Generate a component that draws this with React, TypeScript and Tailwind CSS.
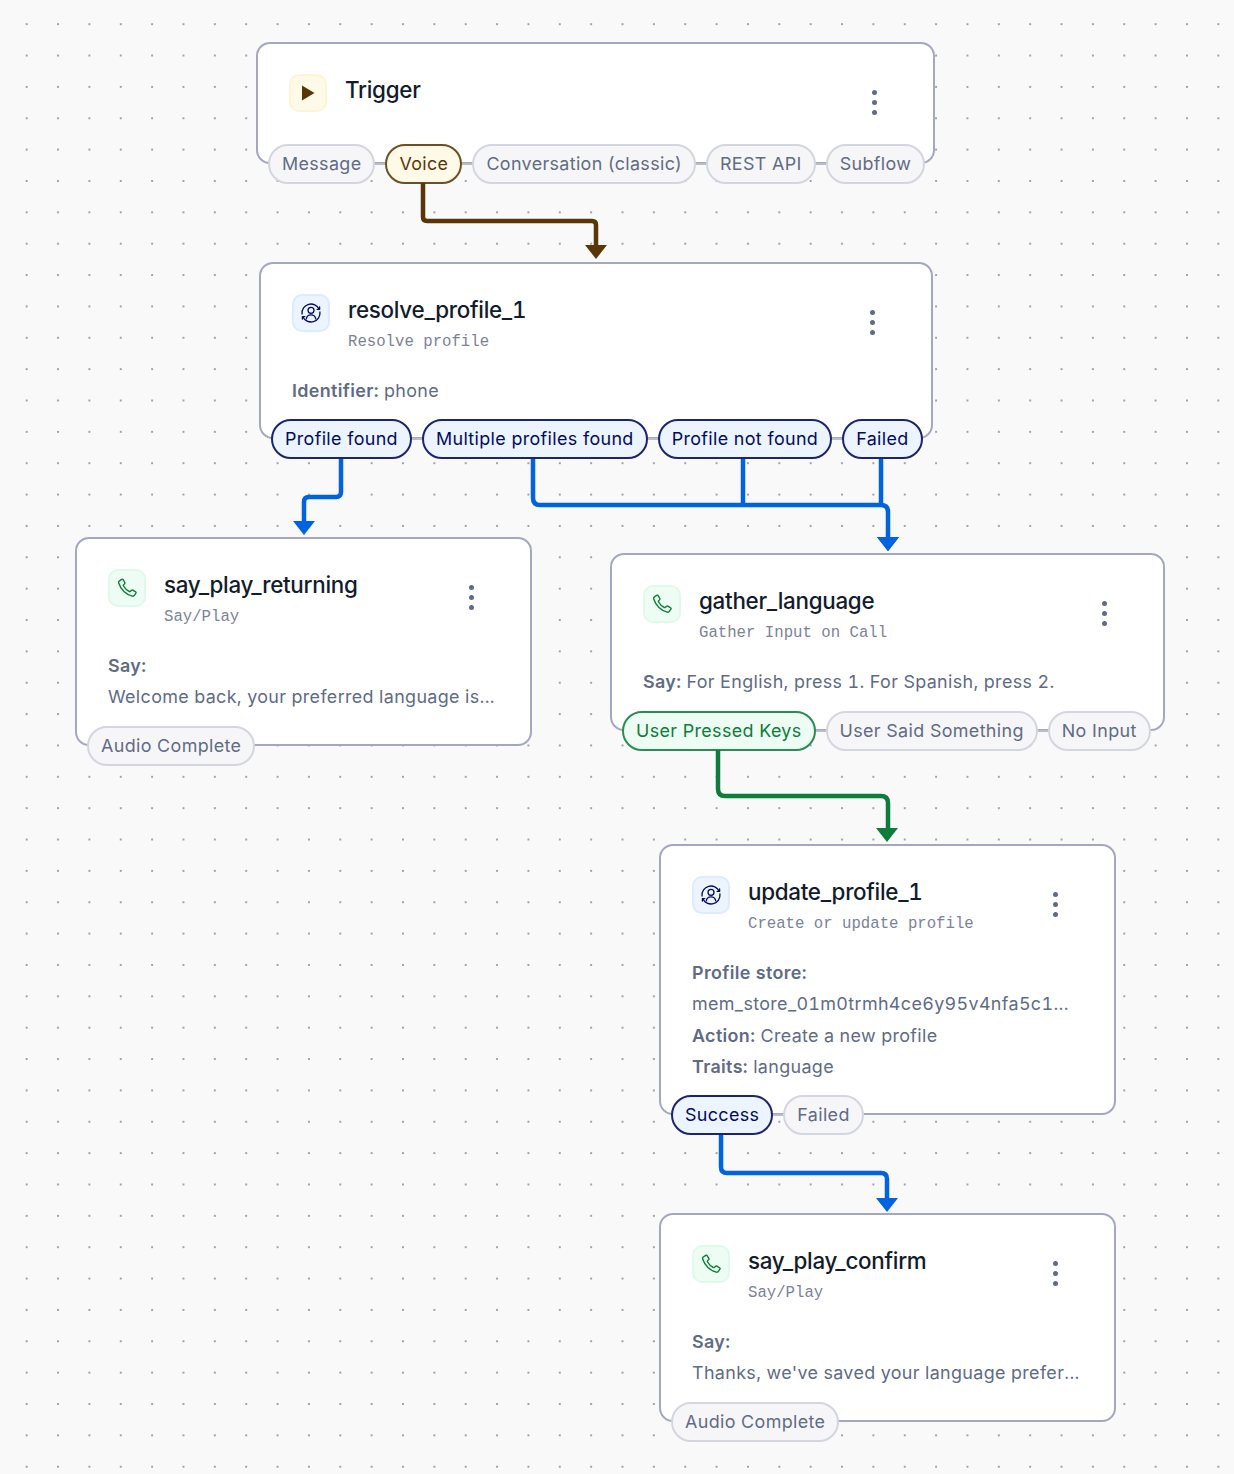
import React from 'react';

type Tone = 'gray' | 'blue' | 'green' | 'brown';

const chipStyles: Record<Tone, string> = {
  gray: 'bg-[#f6f6f8] border-[#d4d6df] text-[#606b85]',
  blue: 'bg-[#ebf4ff] border-[#1c2470] text-[#030b5d]',
  green: 'bg-[#edfdf3] border-[#2a8c52] text-[#0e7c3a]',
  brown: 'bg-[#fff9e8] border-[#6e4e24] text-[#5a3607]',
};

function Chips({ items }: { items: [string, Tone][] }) {
  return (
    <div className="absolute left-[10px] bottom-[-22px] flex items-center">
      {items.map(([label, tone], i) => (
        <React.Fragment key={label}>
          {i > 0 && <div className="w-[10px] h-[2px] bg-[#b9bccb]" />}
          <div className={`h-[40px] px-[12px] flex items-center rounded-[20px] border-2 whitespace-nowrap text-[17.92px] tracking-[0.35px] ${chipStyles[tone]}`}>
            {label}
          </div>
        </React.Fragment>
      ))}
    </div>
  );
}

function PlayIcon() {
  return (
    <div className="w-[38px] h-[38px] rounded-[10px] bg-[#fff9e8] border-2 border-[#fdf4d6] flex items-center justify-center">
      <svg width="18" height="18" viewBox="0 0 18 18"><path d="M3 1.500 L15.500 9 L3 16.500 Z" fill="#5a3607" /></svg>
    </div>
  );
}

function ProfileIcon() {
  return (
    <div className="w-[38px] h-[38px] rounded-[10px] bg-[#ebf4ff] border-2 border-[#dcebff] flex items-center justify-center">
      <svg width="24" height="24" viewBox="0 0 24 24" fill="none" stroke="#030b5d" strokeWidth="1.3" strokeLinecap="round" strokeLinejoin="round">
        <path d="M3.050 13A9 9 0 0 1 20.200 8.300" />
        <path d="M20.950 11A9 9 0 0 1 3.800 15.700" />
        <path d="M20.600 6V8.400H18.200M3.400 18V15.600H5.800" />
        <circle cx="12" cy="9.300" r="3" />
        <path d="M7.300 17.800c.4-2.700 2.300-4 4.700-4s4.300 1.300 4.700 4" />
      </svg>
    </div>
  );
}

function PhoneIcon() {
  return (
    <div className="w-[38px] h-[38px] rounded-[10px] bg-[#edfdf3] border-2 border-[#e1f9ea] flex items-center justify-center">
      <svg width="24" height="24" viewBox="0 0 24 24" fill="none" stroke="#0e7c3a" strokeWidth="1.400" strokeLinejoin="round">
        <path d="M4.500 4.800 6.700 3.300c.5-.3 1.100-.2 1.400.3l1.700 2.800c.3.500.2 1-.2 1.400L8.600 8.700c-.3.300-.4.700-.2 1.100 1.300 2.500 3.400 4.500 6 5.700.4.200.8.100 1.100-.2l1-1c.4-.4.900-.5 1.400-.2l2.700 1.700c.5.300.6.900.3 1.400l-1.400 2c-.5.800-1.400 1.100-2.300.9C11.200 18.600 5.700 13.400 3.700 7 3.400 6.100 3.800 5.300 4.500 4.800Z" />
      </svg>
    </div>
  );
}

function MenuDots() {
  return (
    <div className="absolute right-[56px] top-[46px] flex flex-col gap-[5px]">
      <div className="w-[5px] h-[5px] rounded-full bg-[#606b85]" />
      <div className="w-[5px] h-[5px] rounded-full bg-[#606b85]" />
      <div className="w-[5px] h-[5px] rounded-full bg-[#606b85]" />
    </div>
  );
}

function Card({ className, icon, title, sub, children, chips }: {
  className: string;
  icon: React.ReactNode;
  title: string;
  sub?: string;
  children?: React.ReactNode;
  chips: [string, Tone][];
}) {
  return (
    <div className={`absolute bg-white border-2 border-[#a3a8c0] rounded-[14px] pl-[31px] pr-[30px] pt-[30px] ${className}`}>
      <div className="flex gap-[18px]">
        {icon}
        <div>
          <div className="text-[22.4px] leading-[31px] font-medium text-[#121c2d] tracking-[-0.28px] tabular-nums">{title}</div>
          {sub && <div className="mt-[1px] font-['Liberation_Mono',monospace] text-[15.68px] leading-[32px] text-[#7b8299]">{sub}</div>}
        </div>
      </div>
      {children && <div className="mt-[17px] text-[17.92px] leading-[31.36px] text-[#606b85] tracking-[0.35px] tabular-nums">{children}</div>}
      <MenuDots />
      <Chips items={chips} />
    </div>
  );
}

function Edge({ d, color, tip }: { d: string; color: string; tip: [number, number] }) {
  const [x, y] = tip;
  return (
    <g>
      <path d={d} fill="none" stroke={color} strokeWidth="4.5" strokeLinejoin="round" />
      <path d={`M${x - 11} ${y - 14} H${x + 11} L${x} ${y} Z`} fill={color} />
    </g>
  );
}

export default function App() {
  return (
    <div className="relative w-[1234px] h-[1474px] overflow-hidden bg-[#f9f9fa] bg-[radial-gradient(circle,#9ca1b3_1px,transparent_1.2px)] bg-[size:31.36px_31.36px] bg-[position:11px_8.5px] font-['Inter',sans-serif]">
      <Card className="left-[256px] top-[42px] w-[679px] h-[122px]" icon={<PlayIcon />} title="Trigger"
        chips={[['Message', 'gray'], ['Voice', 'brown'], ['Conversation (classic)', 'gray'], ['REST API', 'gray'], ['Subflow', 'gray']]} />

      <Card className="left-[259px] top-[262px] w-[674px] h-[177px]" icon={<ProfileIcon />} title="resolve_profile_1" sub="Resolve profile"
        chips={[['Profile found', 'blue'], ['Multiple profiles found', 'blue'], ['Profile not found', 'blue'], ['Failed', 'blue']]}>
        <p><b className="font-semibold">Identifier:</b> phone</p>
      </Card>

      <Card className="left-[75px] top-[537px] w-[457px] h-[209px]" icon={<PhoneIcon />} title="say_play_returning" sub="Say/Play"
        chips={[['Audio Complete', 'gray']]}>
        <p className="font-semibold">Say:</p>
        <p>Welcome back, your preferred language is...</p>
      </Card>

      <Card className="left-[610px] top-[553px] w-[555px] h-[178px]" icon={<PhoneIcon />} title="gather_language" sub="Gather Input on Call"
        chips={[['User Pressed Keys', 'green'], ['User Said Something', 'gray'], ['No Input', 'gray']]}>
        <p><b className="font-semibold">Say:</b> For English, press 1. For Spanish, press 2.</p>
      </Card>

      <Card className="left-[659px] top-[844px] w-[457px] h-[271px]" icon={<ProfileIcon />} title="update_profile_1" sub="Create or update profile"
        chips={[['Success', 'blue'], ['Failed', 'gray']]}>
        <p className="font-semibold">Profile store:</p>
        <p>mem_store_01m0trmh4ce6y95v4nfa5c1...</p>
        <p><b className="font-semibold">Action:</b> Create a new profile</p>
        <p><b className="font-semibold">Traits:</b> language</p>
      </Card>

      <Card className="left-[659px] top-[1213px] w-[457px] h-[209px]" icon={<PhoneIcon />} title="say_play_confirm" sub="Say/Play"
        chips={[['Audio Complete', 'gray']]}>
        <p className="font-semibold">Say:</p>
        <p>Thanks, we've saved your language prefer...</p>
      </Card>

      <svg className="absolute inset-0 pointer-events-none" width="1234" height="1474">
        <Edge color="#5a3607" d="M423 183V217q0 4 4 4H592q4 0 4 4V248" tip={[596, 259]} />
        <Edge color="#0263e0" d="M341 459V492q0 5-5 5H309q-5 0-5 5V525" tip={[304, 535]} />
        <Edge color="#0263e0" d="M533 459V498q0 7 7 7H881q7 0 7 7V540" tip={[888, 551]} />
        <Edge color="#0263e0" d="M743 459V505" tip={[888, 551]} />
        <Edge color="#0263e0" d="M881 459V505" tip={[888, 551]} />
        <Edge color="#0e7c3a" d="M718 750V789q0 7 7 7H881q7 0 7 7V830" tip={[887, 842]} />
        <Edge color="#0263e0" d="M721 1135V1167q0 6 6 6H881q6 0 6 6V1200" tip={[887, 1212]} />
      </svg>
    </div>
  );
}
